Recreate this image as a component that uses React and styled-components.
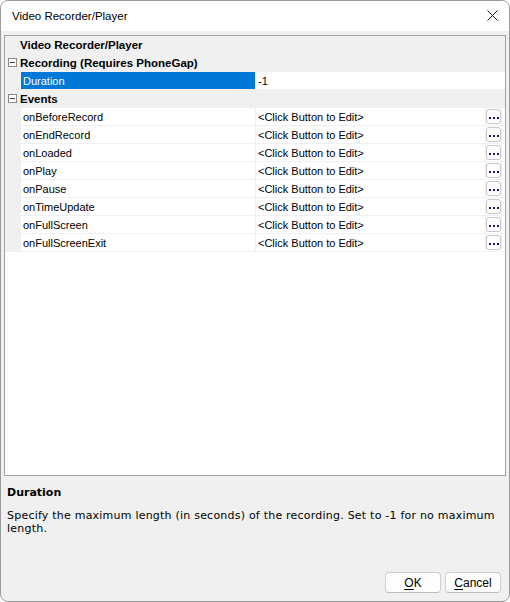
import React from "react";
import styled, { createGlobalStyle } from "styled-components";

const Global = createGlobalStyle`
  html, body { margin: 0; padding: 0; background: #ffffff; }
  #root { width: 510px; height: 602px; }
  * { box-sizing: border-box; }
`;

const Window = styled.div`
  width: 510px;
  height: 602px;
  border: 1px solid #9a9a9a;
  border-radius: 8px;
  overflow: hidden;
  display: flex;
  flex-direction: column;
  background: #f0f0f0;
  font-family: "Liberation Sans", Arial, sans-serif;
  color: #000;
`;

const TitleBar = styled.div`
  height: 30px;
  flex: none;
  background: #ffffff;
  display: flex;
  align-items: center;
  justify-content: space-between;
  padding: 0 11px 0 11px;
  font-size: 11.5px;
`;

const CloseBtn = styled.div`
  width: 12px;
  height: 12px;
  display: flex;
  align-items: center;
  justify-content: center;
  margin-top: -1px;
`;

const Body = styled.div`
  flex: 1;
  display: flex;
  flex-direction: column;
  padding: 4px 3px 8px 3px;
`;

const Grid = styled.div`
  height: 441px;
  flex: none;
  border: 1px solid #a0a0a0;
  background: #ffffff;
  display: flex;
  flex-direction: column;
`;

const Rows = styled.div`
  display: flex;
  flex-direction: column;
  gap: 1px;
  background: #f0f0f0;
  padding-bottom: 1px;
`;

const CategoryRow = styled.div`
  height: 17px;
  display: flex;
  align-items: center;
  background: #f0f0f0;
  font-size: 11.5px;
  font-weight: bold;
`;

const Toggle = styled.div`
  width: 15px;
  flex: none;
  display: flex;
  align-items: center;
  justify-content: center;
  padding-right: 1px;
`;

const ToggleBox = styled.div`
  width: 9px;
  height: 9px;
  border: 1px solid #8c8c8c;
  background: #fff;
  display: flex;
  align-items: center;
  justify-content: center;
  &::after {
    content: "";
    width: 5px;
    height: 1px;
    background: #3c3c3c;
  }
`;

const CatLabel = styled.span`
  white-space: nowrap;
`;

const PropRow = styled.div`
  height: 17px;
  display: grid;
  grid-template-columns: 15px 234px 1fr ${(p) => (p.$button ? "15px 3px" : "")};
  column-gap: 1px;
  background: #f0f0f0;
  font-size: 11px;
`;

const Margin = styled.div`
  background: #f0f0f0;
`;

const NameCell = styled.div`
  background: ${(p) => (p.$selected ? "#0078d7" : "#ffffff")};
  color: ${(p) => (p.$selected ? "#ffffff" : "#000000")};
  padding-left: 2px;
  display: flex;
  align-items: center;
  white-space: nowrap;
`;

const ValueCell = styled.div`
  background: #ffffff;
  padding-left: 2px;
  display: flex;
  align-items: center;
  white-space: nowrap;
`;

const EllipsisCell = styled.div`
  background: #ffffff;
  display: flex;
  align-items: center;
  justify-content: center;
`;

const EllipsisBtn = styled.div`
  width: 15px;
  height: 15px;
  border: 1px solid #c8c8c8;
  border-radius: 3px;
  background: #fdfdfd;
  display: flex;
  align-items: flex-end;
  justify-content: center;
  gap: 2px;
  padding-bottom: 4px;
`;

const Dot = styled.span`
  width: 2px;
  height: 2px;
  background: #1a1a80;
`;

const Filler = styled.div`
  background: #ffffff;
`;

const Desc = styled.div`
  flex: 1;
  padding: 10px 3px 0 3px;
  font-family: "DejaVu Sans", Verdana, sans-serif;
  font-size: 11px;
`;

const DescTitle = styled.div`
  font-weight: bold;
  line-height: 13px;
  margin-bottom: 10px;
`;

const DescText = styled.div`
  line-height: 13px;
  letter-spacing: 0.22px;
  padding-right: 4px;
`;

const Buttons = styled.div`
  display: flex;
  justify-content: flex-end;
  gap: 4px;
  padding-right: 5px;
`;

const Button = styled.div`
  width: 56px;
  height: 21px;
  border: 1px solid #d0d0d0;
  border-bottom-color: #bcbcbc;
  border-radius: 4px;
  background: #fdfdfd;
  display: flex;
  align-items: center;
  justify-content: center;
  font-family: "Liberation Sans", Arial, sans-serif;
  font-size: 12px;
  u { text-decoration: underline; text-underline-offset: 2px; }
`;

const events = [
  "onBeforeRecord",
  "onEndRecord",
  "onLoaded",
  "onPlay",
  "onPause",
  "onTimeUpdate",
  "onFullScreen",
  "onFullScreenExit",
];

export default function App() {
  return (
    <>
      <Global />
      <Window>
        <TitleBar>
          <span>Video Recorder/Player</span>
          <CloseBtn>
            <svg width="11" height="11" viewBox="0 0 11 11">
              <path d="M0.5 0.5 L10.5 10.5 M10.5 0.5 L0.5 10.5" stroke="#1a1a1a" strokeWidth="1" />
            </svg>
          </CloseBtn>
        </TitleBar>
        <Body>
          <Grid>
            <Rows>
              <CategoryRow>
                <Toggle />
                <CatLabel>Video Recorder/Player</CatLabel>
              </CategoryRow>
              <CategoryRow>
                <Toggle>
                  <ToggleBox />
                </Toggle>
                <CatLabel>Recording (Requires PhoneGap)</CatLabel>
              </CategoryRow>
              <PropRow>
                <Margin />
                <NameCell $selected>Duration</NameCell>
                <ValueCell>-1</ValueCell>
              </PropRow>
              <CategoryRow>
                <Toggle>
                  <ToggleBox />
                </Toggle>
                <CatLabel>Events</CatLabel>
              </CategoryRow>
              {events.map((e) => (
                <PropRow key={e} $button>
                  <Margin />
                  <NameCell>{e}</NameCell>
                  <ValueCell>&lt;Click Button to Edit&gt;</ValueCell>
                  <EllipsisCell>
                    <EllipsisBtn>
                      <Dot />
                      <Dot />
                      <Dot />
                    </EllipsisBtn>
                  </EllipsisCell>
                  <Filler />
                </PropRow>
              ))}
            </Rows>
          </Grid>
          <Desc>
            <DescTitle>Duration</DescTitle>
            <DescText>
              Specify the maximum length (in seconds) of the recording. Set to -1 for no maximum length.
            </DescText>
          </Desc>
          <Buttons>
            <Button>
              <span><u>O</u>K</span>
            </Button>
            <Button>
              <span><u>C</u>ancel</span>
            </Button>
          </Buttons>
        </Body>
      </Window>
    </>
  );
}
